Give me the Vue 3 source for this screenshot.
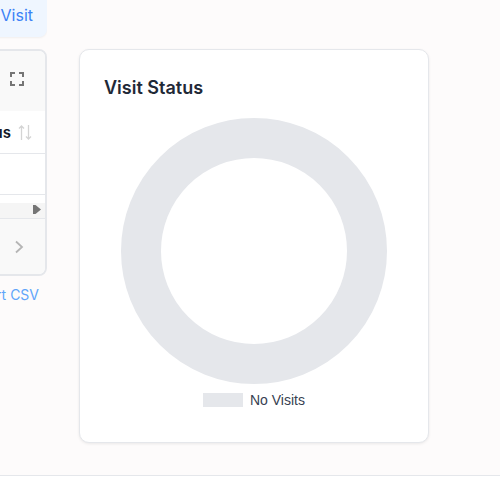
<script setup>
  import { ref } from 'vue'

  const legend = ref('No Visits')
</script>

<template>
  <main class="page">
    <div class="content">
      <section class="left">
        <button class="visit-btn">Add Visit</button>
        <div class="table-card">
          <div class="toolbar">
            <svg width="14" height="14" viewBox="0 0 14 14" class="fullscreen">
              <path d="M0 5V0H5V2H2V5ZM9 0H14V5H12V2H9ZM14 9V14H9V12H12V9ZM5 14H0V9H2V12H5Z" fill="#757575" />
            </svg>
          </div>
          <div class="head-row">
            <span class="head-label">Status</span>
            <svg width="14" height="17" viewBox="0 0 14 17" class="sort">
              <path d="M3.5 16V2M1 4.5L3.5 2L6 4.5M10.5 1V15M8 12.5L10.5 15L13 12.5" fill="none" stroke="#d4d4d4" stroke-width="1.3" />
            </svg>
          </div>
          <div class="body-row"></div>
          <div class="scroll-row">
            <svg width="8" height="9" viewBox="0 0 8 9"><path d="M0 0H2.5L8 4.5L2.5 9H0Z" fill="#757575" /></svg>
          </div>
          <div class="pager">
            <svg width="10" height="14" viewBox="0 0 10 14"><path d="M2 1.5L8 7L2 12.5" fill="none" stroke="#b5b5b5" stroke-width="1.8" /></svg>
          </div>
        </div>
        <a class="export">Export CSV</a>
      </section>

      <section class="chart-card">
        <h2>Visit Status</h2>
        <div class="donut-wrap">
          <div class="donut"></div>
        </div>
        <div class="legend">
          <span class="swatch"></span>
          <span>{{ legend }}</span>
        </div>
      </section>
    </div>
    <footer class="footer"></footer>
  </main>
</template>

<style scoped>
.page {
  width: 500px;
  height: 500px;
  overflow: hidden;
  display: flex;
  flex-direction: column;
  background: #fdfbfb;
  font-family: Inter, 'Liberation Sans', sans-serif;
}
.content {
  flex: 1;
  display: flex;
  align-items: flex-start;
  gap: 32px;
}
.left {
  width: 47px;
  flex-shrink: 0;
  display: flex;
  flex-direction: column;
  align-items: flex-end;
  overflow: hidden;
  height: 310px;
}
.visit-btn {
  flex-shrink: 0;
  width: 120px;
  height: 37px;
  margin-right: 0;
  border: none;
  border-radius: 0 0 8px 8px;
  background: #eff6ff;
  color: #3b82f6;
  font-family: inherit;
  font-size: 16px;
  text-align: right;
  padding: 0 14px 7px 0;
  box-shadow: 0 1px 2px rgba(0, 0, 0, 0.05);
}
.table-card {
  flex-shrink: 0;
  width: 300px;
  margin-top: 12px;
  box-sizing: border-box;
  background: #fff;
  border: 2px solid #e5e7eb;
  border-radius: 8px;
  display: flex;
  flex-direction: column;
}
.toolbar {
  height: 60px;
  background: #f9f9f9;
  display: flex;
  align-items: center;
  justify-content: flex-end;
  padding-right: 21px;
  border-radius: 6px 6px 0 0;
}
.fullscreen {
  margin-top: -4px;
}
.head-row {
  box-sizing: border-box;
  height: 43px;
  border-bottom: 1px solid #e5e7eb;
  display: flex;
  align-items: center;
  justify-content: flex-end;
  gap: 7px;
  padding-right: 13px;
}
.head-label {
  font-size: 15px;
  font-weight: 600;
  color: #111827;
}
.body-row {
  box-sizing: border-box;
  height: 41px;
  border-bottom: 1px solid #e5e7eb;
}
.scroll-row {
  box-sizing: border-box;
  height: 24px;
  border-bottom: 1px solid #e5e7eb;
  display: flex;
  justify-content: flex-end;
  padding: 10px 4px 0 0;
  background: linear-gradient(#fff 0 8px, #f5f5f5 8px);
}
.pager {
  height: 55px;
  background: #f9f9f9;
  display: flex;
  align-items: center;
  justify-content: flex-end;
  padding-right: 21px;
  border-radius: 0 0 6px 6px;
}
.export {
  flex-shrink: 0;
  margin-top: 10px;
  font-size: 14px;
  line-height: 17px;
  color: #60a5fa;
  white-space: nowrap;
  margin-right: 8px;
}
.chart-card {
  width: 350px;
  height: 394px;
  margin-top: 49px;
  box-sizing: border-box;
  background: #fff;
  border: 1px solid #e5e7eb;
  border-radius: 10px;
  box-shadow: 0 1px 3px rgba(0, 0, 0, 0.08);
  padding: 26px 24px 0;
}
h2 {
  margin: 0;
  font-size: 18px;
  font-weight: 600;
  line-height: 24px;
  color: #1f2937;
}
.donut-wrap {
  display: flex;
  justify-content: center;
  margin-top: 18px;
}
.donut {
  width: 266px;
  height: 266px;
  box-sizing: border-box;
  border: 40px solid #e5e7eb;
  border-radius: 50%;
}
.legend {
  display: flex;
  align-items: center;
  justify-content: center;
  gap: 7px;
  margin-top: 8px;
  font-family: 'Liberation Sans', sans-serif;
  font-size: 14px;
  line-height: 16px;
  color: #374151;
}
.swatch {
  width: 40px;
  height: 14px;
  background: #e5e7eb;
}
.footer {
  height: 24px;
  background: #fff;
  border-top: 1px solid #e5e7eb;
}
</style>
